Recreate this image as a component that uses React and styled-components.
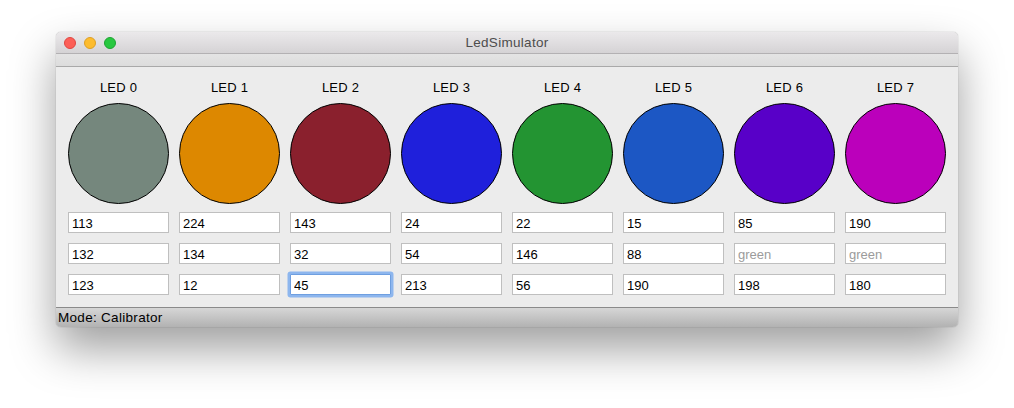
import React from 'react';
import styled, { createGlobalStyle } from 'styled-components';

const GlobalStyle = createGlobalStyle`
  html, body {
    margin: 0;
    padding: 0;
    background: #ffffff;
  }
  body {
    font-family: 'Liberation Sans', Arial, sans-serif;
  }
`;

const Page = styled.div`
  width: 1014px;
  height: 408px;
  padding: 32px 0 0 56px;
  box-sizing: border-box;
  overflow: hidden;
`;

const Window = styled.div`
  width: 902px;
  border-radius: 5px;
  background: #ececec;
  box-shadow: 0 22px 45px rgba(0, 0, 0, 0.38), 0 0 1px rgba(0, 0, 0, 0.45);
  overflow: hidden;
  display: flex;
  flex-direction: column;
`;

const TitleBar = styled.div`
  position: relative;
  height: 21px;
  display: flex;
  align-items: center;
  justify-content: center;
  background: linear-gradient(to bottom, #ebe9eb, #d5d3d5);
  border-bottom: 1px solid #b3b1b3;
  font-size: 13.5px;
  letter-spacing: 0.3px;
  color: #4d4d4d;
`;

const Lights = styled.div`
  position: absolute;
  left: 8px;
  top: 5px;
  display: flex;
  gap: 8px;
`;

const Light = styled.span`
  width: 12px;
  height: 12px;
  border-radius: 50%;
  box-sizing: border-box;
  background: ${p => p.$color};
  border: 0.5px solid ${p => p.$edge};
`;

const Strip = styled.div`
  height: 12px;
  background: linear-gradient(to bottom, #e4e4e4, #dcdcdc);
  border-bottom: 1px solid #a9a9a9;
`;

const Content = styled.div`
  display: grid;
  grid-template-columns: repeat(8, 101px);
  column-gap: 10px;
  padding: 13px 12px 12px;
`;

const Column = styled.div`
  display: flex;
  flex-direction: column;
  align-items: center;
`;

const Label = styled.div`
  height: 16px;
  line-height: 16px;
  font-size: 13px;
  letter-spacing: 0.2px;
  color: #000;
  margin-bottom: 7px;
`;

const Led = styled.div`
  width: 101px;
  height: 101px;
  box-sizing: border-box;
  border-radius: 50%;
  border: 1px solid #000;
  background: ${p => p.$color};
  margin-bottom: 8px;
`;

const Field = styled.input`
  width: 101px;
  height: 21px;
  box-sizing: border-box;
  margin: 0 0 10px;
  padding: 1px 3px 0;
  border: 1px solid ${p => (p.$focused ? '#6f9fe0' : '#bfbfbf')};
  border-radius: ${p => (p.$focused ? '1px' : '0')};
  box-shadow: ${p => (p.$focused ? '0 0 0 2.5px #8db6ee' : 'none')};
  background: #fff;
  font-family: 'Liberation Sans', Arial, sans-serif;
  font-size: 13px;
  color: #000;
  outline: none;

  &:last-child {
    margin-bottom: 0;
  }

  &::placeholder {
    color: #9b9b9b;
  }
`;

const StatusBar = styled.div`
  height: 19px;
  display: flex;
  align-items: center;
  padding-left: 2px;
  border-top: 1px solid #8a8a8a;
  background: linear-gradient(to bottom, #d6d6d6, #b2b2b2);
  font-size: 13.5px;
  letter-spacing: 0.3px;
  color: #000;
`;

const leds = [
  { r: '113', g: '132', b: '123', color: 'rgb(117, 135, 125)' },
  { r: '224', g: '134', b: '12', color: 'rgb(221, 136, 0)' },
  { r: '143', g: '32', b: '45', color: 'rgb(138, 32, 45)' },
  { r: '24', g: '54', b: '213', color: 'rgb(31, 32, 219)' },
  { r: '22', g: '146', b: '56', color: 'rgb(35, 148, 50)' },
  { r: '15', g: '88', b: '190', color: 'rgb(28, 87, 196)' },
  { r: '85', g: '', b: '198', color: 'rgb(88, 0, 200)' },
  { r: '190', g: '', b: '180', color: 'rgb(187, 0, 187)' },
];

const App = () => {
  return (
    <Page>
      <GlobalStyle />
      <Window>
        <TitleBar>
          <Lights>
            <Light $color="#fc5f57" $edge="#df4641" />
            <Light $color="#fdbc2e" $edge="#dd9f25" />
            <Light $color="#28c840" $edge="#1ea332" />
          </Lights>
          LedSimulator
        </TitleBar>
        <Strip />
        <Content>
          {leds.map((led, i) => (
            <Column key={i}>
              <Label>LED {i}</Label>
              <Led $color={led.color} />
              <Field defaultValue={led.r} />
              <Field defaultValue={led.g} placeholder="green" />
              <Field defaultValue={led.b} $focused={i === 2} />
            </Column>
          ))}
        </Content>
        <StatusBar>Mode: Calibrator</StatusBar>
      </Window>
    </Page>
  );
};

export default App;
